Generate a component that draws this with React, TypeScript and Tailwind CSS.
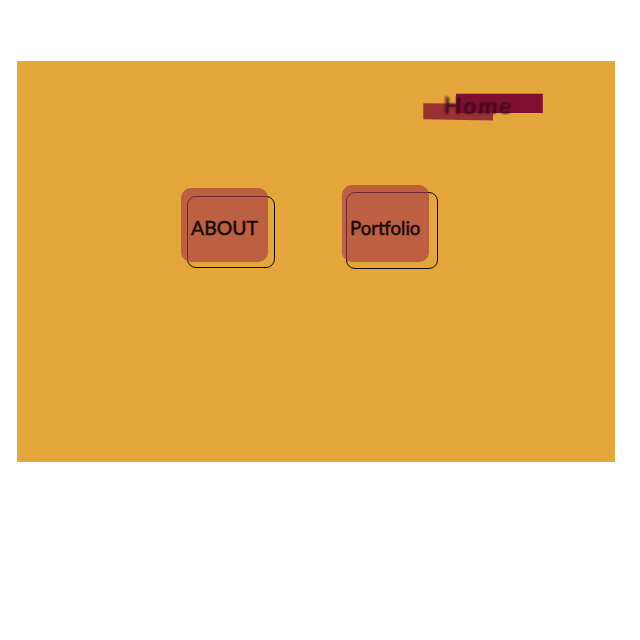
type CardProps = { label: string; fill: string; outline: string; text: string };

function Card({ label, fill, outline, text }: CardProps) {
  return (
    <a className="relative block h-[86px] w-[97px]">
      <span className={`absolute border border-[#0c0806] ${outline}`} />
      <span className={`absolute rounded-[10px] bg-[#a73845]/64 ${fill}`} />
      <span className={`absolute whitespace-nowrap leading-[24px] text-[#160805] [-webkit-text-stroke:0.5px_#160805] ${text}`}>{label}</span>
    </a>
  );
}

export default function App() {
  return (
    <div className="h-[640px] w-[640px] bg-white pl-[17px] pt-[61px]">
      <main className="flex h-[401px] w-[598px] flex-col border-l border-t border-[#e6ad50] bg-[#e4a53a] font-['Lato',sans-serif]">
        <nav className="ml-[405px] mt-[31px] h-[28px] w-[120px]">
          <a className="relative block h-full w-full">
            <svg className="absolute inset-0" width="120" height="28" viewBox="0 0 120 28">
              <path d="M0.3 10.3L70 11V27.4L0.3 26.3Z" fill="#983234" />
              <path d="M33 0.7H119.8V20H33Z" fill="#800e31" />
            </svg>
            <span className="absolute left-[19px] top-[-2px] -skew-x-4 text-[23px] font-bold leading-[24px] tracking-[1.8px] text-[#7d1b30]/30 [text-shadow:2px_2px_2px_rgba(30,0,8,0.7)]">
              Home
            </span>
          </a>
        </nav>
        <section className="ml-[163px] mt-[64px] flex gap-[64px]">
          <Card
            label="ABOUT"
            fill="left-0 top-[2.7px] h-[74px] w-[87px]"
            outline="left-[6px] top-[10.5px] h-[72.5px] w-[88px] rounded-[9px]"
            text="left-[10px] top-[31px] text-[19.3px] tracking-[0.1px]"
          />
          <Card
            label="Portfolio"
            fill="left-0 top-[0.4px] h-[76.3px] w-[87px]"
            outline="left-[4px] top-[7px] h-[77px] w-[92px] rounded-[9px]"
            text="left-[8px] top-[31px] text-[18.6px] tracking-[0px]"
          />
        </section>
      </main>
    </div>
  );
}
